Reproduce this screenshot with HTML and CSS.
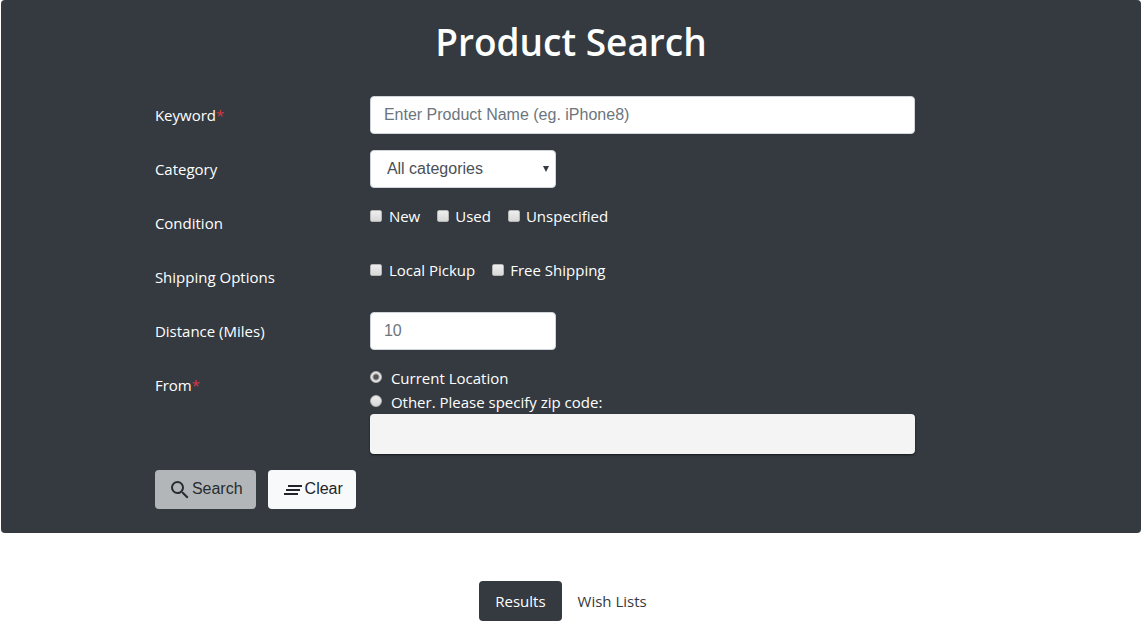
FILE: index.html
```html
<!DOCTYPE html>
<html lang="en">
<head>
<meta charset="utf-8">
<meta name="viewport" content="width=device-width, initial-scale=1">
<title>Product Search</title>
<link rel="stylesheet" href="styles.css">
</head>
<body>
<main class="page">
  <section class="panel">
    <h1 class="title">Product Search</h1>
    <form class="form">
      <div class="row">
        <label class="label" for="keyword">Keyword<span class="required">*</span></label>
        <input class="control" id="keyword" type="text" placeholder="Enter Product Name (eg. iPhone8)">
      </div>
      <div class="row">
        <label class="label" for="category">Category</label>
        <div class="select-wrap">
          <select class="control select" id="category"><option>All categories</option></select>
          <svg class="arrow" width="6" height="6" viewBox="0 0 6 6" aria-hidden="true"><path d="M0 0h6L3 6z" fill="#343a40"/></svg>
        </div>
      </div>
      <div class="row" role="group" aria-labelledby="condition">
        <span class="label" id="condition">Condition</span>
        <div class="checks">
          <label class="check"><input class="box" type="checkbox">New</label>
          <label class="check"><input class="box" type="checkbox">Used</label>
          <label class="check"><input class="box" type="checkbox">Unspecified</label>
        </div>
      </div>
      <div class="row" role="group" aria-labelledby="shipping">
        <span class="label" id="shipping">Shipping Options</span>
        <div class="checks">
          <label class="check"><input class="box" type="checkbox">Local Pickup</label>
          <label class="check"><input class="box" type="checkbox">Free Shipping</label>
        </div>
      </div>
      <div class="row">
        <label class="label" for="distance">Distance (Miles)</label>
        <input class="control short" id="distance" type="text" placeholder="10">
      </div>
      <div class="row" role="group" aria-labelledby="from">
        <span class="label" id="from">From<span class="required">*</span></span>
        <div class="origin">
          <label class="choice"><input class="dot" type="radio" name="origin" checked>Current Location</label>
          <label class="choice"><input class="dot" type="radio" name="origin">Other. Please specify zip code:</label>
          <input class="control zip" type="text" aria-label="Zip code" disabled>
        </div>
      </div>
      <div class="actions">
        <button class="button" type="submit" disabled>
          <svg class="icon" width="24" height="24" viewBox="0 0 24 24" aria-hidden="true"><path fill="currentColor" d="M15.5 14h-.79l-.28-.27A6.47 6.47 0 0 0 16 9.5 6.5 6.5 0 1 0 9.5 16c1.61 0 3.09-.59 4.23-1.57l.27.28v.79l5 4.99L20.49 19l-4.99-5zm-6 0C7.01 14 5 11.99 5 9.5S7.01 5 9.5 5 14 7.01 14 9.5 11.99 14 9.5 14z"/></svg>Search
        </button>
        <button class="button" type="reset">
          <svg class="icon" width="24" height="24" viewBox="0 0 24 24" aria-hidden="true"><path fill="currentColor" d="M5 13h14v-2H5v2zm-2 4h14v-2H3v2zM7 7v2h14V7H7z"/></svg>Clear
        </button>
      </div>
    </form>
  </section>
  <nav class="tabs">
    <a class="tab active" href="#results">Results</a>
    <a class="tab" href="#wish">Wish Lists</a>
  </nav>
</main>
</body>
</html>
```
FILE: styles.css
```css
* { box-sizing: border-box; }
body {
  margin: 0;
  background: #fff;
  color: #343a40;
  font: 15px/24px "Open Sans", "Noto Sans", sans-serif;
}
.page { padding: 0 5px 0 1px; }
.panel {
  padding: 18px 0 24px;
  border-radius: 4px;
  background: #343a40;
  color: #fff;
}
.title {
  margin: 0 0 30px;
  font-size: 37px;
  line-height: 48px;
  font-weight: 600;
  text-align: center;
}
.form {
  display: flex;
  flex-direction: column;
  gap: 16px;
  width: 66.67%;
  margin-left: 13.5%;
}
.row {
  display: grid;
  grid-template-columns: 215px 1fr;
  align-items: start;
  min-height: 38px;
}
.label { padding-top: 7px; }
.required { color: #dc3545; }
.control {
  width: 100%;
  height: 38px;
  padding: 6px 13px;
  border: 1px solid #ced4da;
  border-radius: 4px;
  background: #fff;
  color: #495057;
  font: 16px/24px "Liberation Sans", Arial, sans-serif;
}
.control::placeholder { color: #6c757d; opacity: 1; }
.short, .select-wrap { width: 186px; }
.select-wrap { position: relative; }
.select { appearance: none; padding-left: 16px; }
.arrow { position: absolute; right: 7px; top: 16px; pointer-events: none; }
.checks { display: flex; gap: 17px; }
.check { display: flex; align-items: center; gap: 6px; }
.check + .check { gap: 5px; }
.box, .dot {
  appearance: none;
  width: 12px;
  height: 12px;
  margin: 0 1px 1px 0;
  border: 1px solid #b5b5b5;
  background: linear-gradient(#eee, #d8d8d8);
}
.box { border-radius: 2px; }
.dot { border-radius: 50%; margin-bottom: 3px; }
.dot:checked { background: radial-gradient(circle, #555 0 2px, #e8e8e8 4px); }
.choice { display: flex; align-items: center; gap: 8px; }
.zip {
  display: block;
  height: 40px;
  border: 0;
  background: #f4f4f4;
  box-shadow: 0 1px 2px #16191c;
}
.actions { display: flex; gap: 12px; }
.button {
  display: flex;
  align-items: center;
  height: 39px;
  padding: 0 13px 2px;
  border: 0;
  border-radius: 4px;
  background: #f8f9fa;
  color: #212529;
  font: 16px/24px "Liberation Sans", Arial, sans-serif;
}
.button:disabled { opacity: .65; }
.icon { margin-top: 2px; }
.tabs {
  display: flex;
  justify-content: center;
  margin-top: 48px;
}
.tab {
  padding: 8px 16px;
  border-radius: 4px;
  color: #343a40;
  text-decoration: none;
}
.tab.active { background: #343a40; color: #fff; }
```
